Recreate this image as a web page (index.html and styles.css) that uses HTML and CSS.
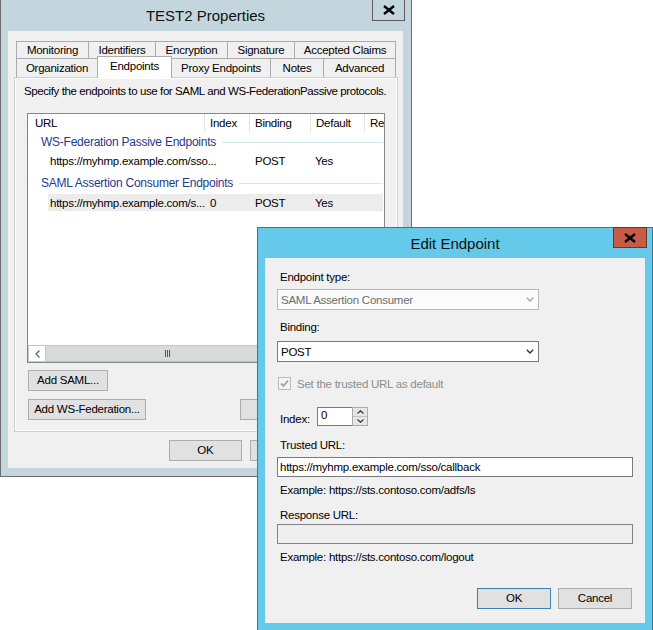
FILE: index.html
```html
<!DOCTYPE html>
<html lang="en">
<head>
  <meta charset="UTF-8">
  <title>TEST2 Properties - Edit Endpoint</title>
  <link rel="stylesheet" href="styles.css">
</head>
<body>
  <!-- relying party properties window -->
  <div class="win props">
    <div class="titlebar">
      <span class="title">TEST2 Properties</span>
      <div class="close">
        <svg width="12" height="10" viewBox="0 0 12 10"><path d="M1 1 L11 9 M11 1 L1 9" stroke="#000" stroke-width="2.4" fill="none"/></svg>
      </div>
    </div>
    <div class="client">
      <div class="tabrow back">
        <div class="tab w73">Monitoring</div>
        <div class="tab w68">Identifiers</div>
        <div class="tab w73">Encryption</div>
        <div class="tab w68">Signature</div>
        <div class="tab w102">Accepted Claims</div>
      </div>
      <div class="tabrow front">
        <div class="tab w82">Organization</div>
        <div class="tab w75 sel">Endpoints</div>
        <div class="tab w100">Proxy Endpoints</div>
        <div class="tab w54">Notes</div>
        <div class="tab w73">Advanced</div>
      </div>
      <div class="page">
        <p class="hint">Specify the endpoints to use for SAML and WS-FederationPassive protocols.</p>
        <div class="list">
          <div class="lv-head">
            <span class="col-url">URL</span>
            <span class="col-idx">Index</span>
            <span class="col-bind">Binding</span>
            <span class="col-def">Default</span>
            <span class="col-re">Re</span>
          </div>
          <div class="lv-group g1"><span>WS-Federation Passive Endpoints</span></div>
          <div class="lv-row r1">
            <span class="cell-url">https://myhmp.example.com/sso...</span>
            <span class="cell-idx"></span>
            <span class="cell-bind">POST</span>
            <span class="cell-def">Yes</span>
          </div>
          <div class="lv-group g2"><span>SAML Assertion Consumer Endpoints</span></div>
          <div class="lv-row r2 selected">
            <span class="cell-url">https://myhmp.example.com/s...</span>
            <span class="cell-idx">0</span>
            <span class="cell-bind">POST</span>
            <span class="cell-def">Yes</span>
          </div>
          <div class="lv-fill"></div>
          <div class="hscroll">
            <div class="sb-btn">
              <svg width="5" height="8" viewBox="0 0 5 8"><path d="M4.5 0.5 L1 4 L4.5 7.5" stroke="#606060" stroke-width="1.2" fill="none"/></svg>
            </div>
            <div class="sb-thumb"><span class="grip"></span><span class="grip"></span><span class="grip"></span></div>
          </div>
        </div>
        <div class="btnrow first">
          <button class="btn w80">Add SAML...</button>
        </div>
        <div class="btnrow">
          <button class="btn w118">Add WS-Federation...</button>
          <button class="btn w75 remove">Remove</button>
        </div>
      </div>
      <div class="footer">
        <button class="btn w74">OK</button>
        <button class="btn w74">Cancel</button>
        <button class="btn w74">Apply</button>
      </div>
    </div>
  </div>

  <!-- edit endpoint dialog -->
  <div class="win edit">
    <div class="titlebar">
      <span class="title">Edit Endpoint</span>
      <div class="close red">
        <svg width="12" height="10" viewBox="0 0 12 10"><path d="M1 1 L11 9 M11 1 L1 9" stroke="#000" stroke-width="2.4" fill="none"/></svg>
      </div>
    </div>
    <div class="client form">
      <span class="lbl">Endpoint type:</span>
      <div class="combo disabled">
        <span>SAML Assertion Consumer</span>
        <svg width="8" height="5" viewBox="0 0 8 5"><path d="M0.8 0.8 L4 4 L7.2 0.8" stroke="#a8a8a8" stroke-width="1.4" fill="none"/></svg>
      </div>
      <span class="lbl gap10">Binding:</span>
      <div class="combo c2">
        <span>POST</span>
        <svg width="8" height="5" viewBox="0 0 8 5"><path d="M0.8 0.8 L4 4 L7.2 0.8" stroke="#333" stroke-width="1.4" fill="none"/></svg>
      </div>
      <div class="check disabled">
        <span class="box">
          <svg width="11" height="11" viewBox="0 0 11 11"><path d="M2 5.5 L4.5 8 L9 2.5" stroke="#a3a3a3" stroke-width="1.8" fill="none"/></svg>
        </span>
        <span>Set the trusted URL as default</span>
      </div>
      <div class="index-row">
        <span class="idx-lbl">Index:</span>
        <div class="spin">
          <span class="spin-val">0</span>
          <div class="spin-btns">
            <span class="spin-btn"><svg width="7" height="4" viewBox="0 0 7 4"><path d="M0.5 3.5 L3.5 0.8 L6.5 3.5" stroke="#333" stroke-width="1.1" fill="none"/></svg></span>
            <span class="spin-btn"><svg width="7" height="4" viewBox="0 0 7 4"><path d="M0.5 0.5 L3.5 3.2 L6.5 0.5" stroke="#333" stroke-width="1.1" fill="none"/></svg></span>
          </div>
        </div>
      </div>
      <span class="lbl gap12">Trusted URL:</span>
      <div class="textbox">https://myhmp.example.com/sso/callback</div>
      <p class="example">Example: https://sts.contoso.com/adfs/ls</p>
      <span class="lbl gap10">Response URL:</span>
      <div class="textbox disabled t2"></div>
      <p class="example">Example: https://sts.contoso.com/logout</p>
      <div class="actions">
        <button class="btn w74 default">OK</button>
        <button class="btn w74">Cancel</button>
      </div>
    </div>
  </div>
</body>
</html>
```

FILE: styles.css
```css
* {
  margin: 0;
  padding: 0;
  box-sizing: border-box;
}

body {
  width: 653px;
  height: 630px;
  overflow: hidden;
  position: relative;
  background: #fff;
  color: #000;
  font-family: "Liberation Sans", Arial, sans-serif;
  font-size: 11.5px;
  letter-spacing: -0.25px;
}

/* windows */
.win {
  position: absolute;
  display: flex;
  flex-direction: column;
}
.titlebar {
  height: 31px;
  position: relative;
  display: flex;
  align-items: center;
  justify-content: center;
  font-size: 15px;
  letter-spacing: 0;
  color: #111;
}
.close {
  position: absolute;
  top: 0;
  right: -2px;
  width: 33px;
  height: 21px;
  border: 1px solid #5d5d5d;
  border-top: none;
  display: flex;
  align-items: center;
  justify-content: center;
}
.client {
  background: #f0f0f0;
  flex: 1;
}

.props {
  left: 0;
  top: 0;
  width: 412px;
  height: 477px;
  background: #c4d6dd;
  border: 1px solid #6d6d6d;
  border-top: none;
  padding: 0 8px 8px 7px;
}
.props .client {
  padding: 10px 0 0 8px;
}

.edit {
  left: 257px;
  top: 227px;
  width: 396px;
  height: 404px;
  background: #65c9e9;
  border: 1px solid #3a7890;
  padding: 0 7px 7px;
}
.edit .titlebar {
  height: 30px;
}
.close.red {
  top: -1px;
  width: 34px;
  height: 21px;
  background: #c75b45;
  border: 1px solid #6d3326;
}

/* tabs */
.tabrow {
  display: flex;
  align-items: flex-start;
}
.tabrow.back {
  height: 17px;
}
.tabrow.front {
  height: 19px;
}
.tab {
  border: 1px solid #acacac;
  border-bottom: none;
  background: #f0f0f0;
  margin-left: -1px;
  text-align: center;
  white-space: nowrap;
}
.tab:first-child {
  margin-left: 0;
}
.back .tab {
  height: 17px;
  line-height: 16px;
}
.front .tab {
  height: 19px;
  line-height: 18px;
}
.front .tab.sel {
  height: 22px;
  margin-top: -2px;
  line-height: 19px;
  background: #fff;
  position: relative;
  z-index: 1;
}
.w54 { width: 54px; }
.w68 { width: 68px; }
.w73 { width: 73px; }
.w74 { width: 74px; }
.w75 { width: 75px; }
.w80 { width: 80px; }
.w82 { width: 82px; }
.w100 { width: 100px; }
.w102 { width: 102px; }
.w118 { width: 118px; }

.page {
  margin-left: -2px;
  width: 384px;
  height: 355px;
  border: 1px solid #cfcfcf;
  box-shadow: inset 1px 1px 0 #fff, inset -1px -1px 0 #fff;
  background: #f0f0f0;
  padding: 6px 0 0 9px;
}
.hint {
  line-height: 15px;
  white-space: nowrap;
  letter-spacing: -0.4px;
}

/* list view */
.list {
  margin: 14px 0 0 3px;
  width: 358px;
  height: 250px;
  border: 1px solid #828790;
  background: #fff;
  display: flex;
  flex-direction: column;
  overflow: hidden;
}
.lv-head {
  height: 18px;
  display: flex;
  line-height: 18px;
  white-space: nowrap;
}
.lv-head span {
  padding-left: 5px;
  border-left: 1px solid #e5e5e5;
}
.lv-head .col-url {
  width: 176px;
  padding-left: 7px;
  border-left: none;
}
.col-idx { width: 45px; }
.col-bind { width: 61px; }
.col-def { width: 54px; }
.col-re { flex: 1; overflow: hidden; }

.lv-group {
  display: flex;
  align-items: center;
  padding-left: 13px;
  color: #1e3a8c;
  font-size: 12px;
  white-space: nowrap;
}
.lv-group::after {
  content: "";
  flex: 1;
  height: 1px;
  background: #d5e7ee;
  margin: 1px 1px 0 6px;
}
.g1 { height: 19px; }
.g2 { height: 23px; }

.lv-row {
  display: flex;
  align-items: center;
  margin-left: 20px;
  white-space: nowrap;
}
.r1 { height: 20px; }
.r2 { height: 17px; }
.lv-row.selected {
  background: #ececec;
  margin-right: 1px;
}
.cell-url {
  width: 156px;
  padding-left: 2px;
  overflow: visible;
}
.cell-idx {
  width: 45px;
  padding-left: 6px;
}
.cell-bind {
  width: 61px;
  padding-left: 6px;
}
.cell-def {
  width: 54px;
  padding-left: 5px;
}
.lv-fill {
  flex: 1;
}

.hscroll {
  height: 17px;
  display: flex;
  background: #e8e8e8;
}
.sb-btn {
  width: 18px;
  background: #fff;
  border: 1px solid #c6c6c6;
  display: flex;
  align-items: center;
  justify-content: center;
}
.sb-thumb {
  width: 245px;
  margin-left: -1px;
  background: #dadada;
  border: 1px solid #c6c6c6;
  display: flex;
  align-items: center;
  justify-content: center;
  gap: 1px;
}
.grip {
  width: 1px;
  height: 7px;
  background: #555;
}

/* buttons */
.btn {
  height: 21px;
  border: 1px solid #adadad;
  background: #e1e1e1;
  font: inherit;
  letter-spacing: inherit;
  color: #000;
  text-align: center;
  line-height: 19px;
  white-space: nowrap;
}
.btn.default {
  border-color: #3c7fb1;
}
.btnrow {
  display: flex;
  margin: 8px 0 0 4px;
}
.btnrow.first {
  margin-top: 7px;
}
.remove {
  margin-left: 94px;
}
.footer {
  display: flex;
  gap: 8px;
  margin: 8px 0 0 153px;
}

/* edit endpoint form */
.form {
  padding: 12px 0 0 12px;
}
.lbl {
  display: block;
  line-height: 15px;
  padding-left: 3px;
}
.gap10 { margin-top: 10px; }
.gap12 { margin-top: 12px; }

.combo {
  width: 262px;
  height: 21px;
  margin-top: 4px;
  border: 1px solid #7a7a7a;
  background: #fff;
  display: flex;
  align-items: center;
  justify-content: space-between;
  padding: 0 4px 0 3px;
}
.combo.c2 {
  margin-top: 6px;
}
.combo.disabled {
  border-color: #b9b9b9;
  background: #fbfbfb;
  color: #6d6d6d;
}

.check {
  margin-top: 14px;
  height: 15px;
  display: flex;
  align-items: center;
  gap: 6px;
  padding-left: 1px;
}
.check.disabled {
  color: #8d8d8d;
}
.box {
  width: 13px;
  height: 13px;
  border: 1px solid #bcbcbc;
  background: #f4f4f4;
  display: flex;
  align-items: center;
  justify-content: center;
}

.index-row {
  margin-top: 16px;
  height: 19px;
  display: flex;
  align-items: flex-end;
}
.idx-lbl {
  width: 40px;
  padding-left: 3px;
  line-height: 15px;
  margin-bottom: -1px;
}
.spin {
  display: flex;
  height: 19px;
}
.spin-val {
  width: 36px;
  border: 1px solid #7a7a7a;
  background: #fff;
  padding: 1px 0 0 3px;
  line-height: 13px;
}
.spin-btns {
  width: 16px;
  display: flex;
  flex-direction: column;
  margin-left: -1px;
  border: 1px solid #acacac;
  background: #e6e6e6;
}
.spin-btn {
  flex: 1;
  display: flex;
  align-items: center;
  justify-content: center;
}
.spin-btn + .spin-btn {
  border-top: 1px solid #c4c4c4;
}

.textbox {
  width: 356px;
  height: 20px;
  margin-top: 4px;
  border: 1px solid #7a7a7a;
  background: #fff;
  padding-left: 2px;
  line-height: 18px;
  white-space: nowrap;
}
.textbox.t2 {
  margin-top: 1px;
}
.textbox.disabled {
  background: #efefef;
  border-color: #838383;
}
.example {
  margin-top: 6px;
  line-height: 15px;
  padding-left: 3px;
}

.actions {
  display: flex;
  justify-content: flex-end;
  gap: 7px;
  margin-top: 23px;
  padding-right: 13px;
}
```
